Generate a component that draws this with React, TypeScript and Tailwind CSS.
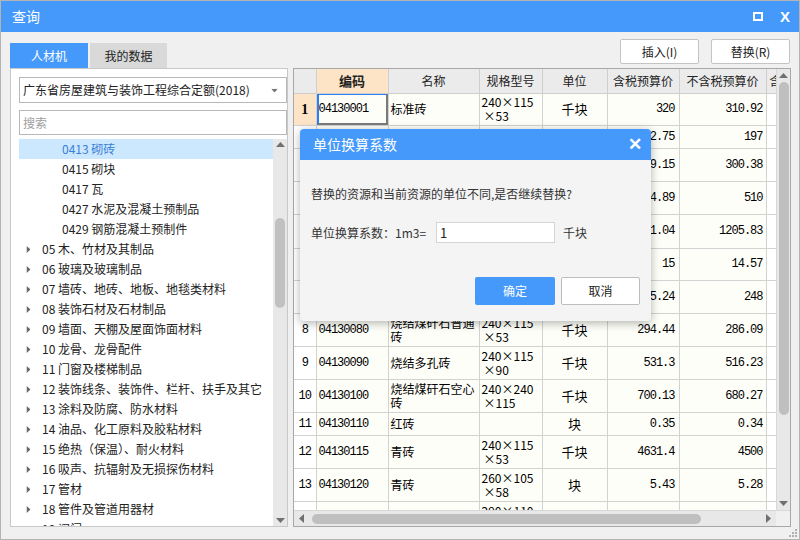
import React from 'react';

type Row = {
  no: string;
  code: string;
  name: string[];
  spec: string[];
  unit: string;
  tax: string;
  noTax: string;
  h: string;
};

const rows: Row[] = [
  { no: '1', code: '04130001', name: ['标准砖'], spec: ['240×115', '×53'], unit: '千块', tax: '320', noTax: '310.92', h: 'h-[32px]' },
  { no: '2', code: '04130005', name: ['标准砖'], spec: [], unit: '千块', tax: '202.75', noTax: '197', h: 'h-[23px]' },
  { no: '3', code: '04130010', name: ['灰砂砖'], spec: ['240×115', '×53'], unit: '千块', tax: '309.15', noTax: '300.38', h: 'h-[33px]' },
  { no: '4', code: '04130020', name: ['灰砂砖'], spec: ['240×115', '×90'], unit: '千块', tax: '524.89', noTax: '510', h: 'h-[33px]' },
  { no: '5', code: '04130030', name: ['烧结空心砖'], spec: ['240×240', '×115'], unit: '千块', tax: '1241.04', noTax: '1205.83', h: 'h-[34px]' },
  { no: '6', code: '04130040', name: ['页岩多孔砖'], spec: ['240×115', '×90'], unit: '块', tax: '15', noTax: '14.57', h: 'h-[32px]' },
  { no: '7', code: '04130050', name: ['烧结煤矸石实心', '砖'], spec: ['240×115', '×53'], unit: '千块', tax: '255.24', noTax: '248', h: 'h-[33px]' },
  { no: '8', code: '04130080', name: ['烧结煤矸石普通', '砖'], spec: ['240×115', '×53'], unit: '千块', tax: '294.44', noTax: '286.09', h: 'h-[33px]' },
  { no: '9', code: '04130090', name: ['烧结多孔砖'], spec: ['240×115', '×90'], unit: '千块', tax: '531.3', noTax: '516.23', h: 'h-[33px]' },
  { no: '10', code: '04130100', name: ['烧结煤矸石空心', '砖'], spec: ['240×240', '×115'], unit: '千块', tax: '700.13', noTax: '680.27', h: 'h-[33px]' },
  { no: '11', code: '04130110', name: ['红砖'], spec: [], unit: '块', tax: '0.35', noTax: '0.34', h: 'h-[23px]' },
  { no: '12', code: '04130115', name: ['青砖'], spec: ['240×115', '×53'], unit: '千块', tax: '4631.4', noTax: '4500', h: 'h-[33px]' },
  { no: '13', code: '04130120', name: ['青砖'], spec: ['260×105', '×58'], unit: '块', tax: '5.43', noTax: '5.28', h: 'h-[33px]' },
  { no: '14', code: '04130130', name: ['青砖'], spec: ['290×110', '×60'], unit: '块', tax: '6.12', noTax: '5.95', h: 'h-[33px]' },
];

// tree rows, sub = indented child
const tree: { label: string; sub?: boolean }[] = [
  { label: '0413 砌砖', sub: true },
  { label: '0415 砌块', sub: true },
  { label: '0417 瓦', sub: true },
  { label: '0427 水泥及混凝土预制品', sub: true },
  { label: '0429 钢筋混凝土预制件', sub: true },
  { label: '05 木、竹材及其制品' },
  { label: '06 玻璃及玻璃制品' },
  { label: '07 墙砖、地砖、地板、地毯类材料' },
  { label: '08 装饰石材及石材制品' },
  { label: '09 墙面、天棚及屋面饰面材料' },
  { label: '10 龙骨、龙骨配件' },
  { label: '11 门窗及楼梯制品' },
  { label: '12 装饰线条、装饰件、栏杆、扶手及其它' },
  { label: '13 涂料及防腐、防水材料' },
  { label: '14 油品、化工原料及胶粘材料' },
  { label: '15 绝热（保温）、耐火材料' },
  { label: '16 吸声、抗辐射及无损探伤材料' },
  { label: '17 管材' },
  { label: '18 管件及管道用器材' },
  { label: '19 阀门' },
];

const Tri = ({ dir, className }: { dir: 'up' | 'down' | 'left' | 'right'; className?: string }) => {
  const pts = {
    up: '0,5 4.5,0 9,5',
    down: '0,0 4.5,5 9,0',
    left: '5,0 0,4.5 5,9',
    right: '0,0 5,4.5 0,9',
  }[dir];
  const vertical = dir === 'up' || dir === 'down';
  return (
    <svg width={vertical ? 9 : 5} height={vertical ? 5 : 9} className={`shrink-0 ${className ?? ''}`}>
      <polygon points={pts} fill="currentColor" />
    </svg>
  );
};

const cn = "font-['Noto_Sans_CJK_SC',sans-serif]";
const mono = "font-['Liberation_Mono',monospace] text-[12px] tracking-[-1px]";

const App: React.FC = () => {
  return (
    <div className={`relative w-[800px] h-[540px] bg-[#f0f0f0] border border-[#b4b4b4] flex flex-col overflow-hidden text-[#222] text-[12px] ${cn}`}>
      {/* title bar */}
      <div className="h-[31px] bg-[#4599fa] flex items-center pl-[11px] pr-[9px] text-white shrink-0">
        <span className="text-[14px]">查询</span>
        <div className="ml-auto flex items-center gap-[17px]">
          <div className="w-[10px] h-[9px] border-2 border-white" />
          <span className="font-['Liberation_Sans',sans-serif] font-bold text-[15px] leading-none">X</span>
        </div>
      </div>

      {/* tabs + buttons */}
      <div className="h-[36px] flex shrink-0 pl-[9px] pr-[9px]">
        <div className="flex items-end gap-[2px]">
          <div className="w-[78px] h-[25px] bg-[#4599fa] text-white flex items-center justify-center">人材机</div>
          <div className="w-[77px] h-[25px] bg-[#d9d9d9] text-[#222] flex items-center justify-center">我的数据</div>
        </div>
        <div className="ml-auto flex items-start pt-[7px] gap-[12px]">
          <button className="w-[79px] h-[25px] bg-white border border-[#c4c4c4] rounded-[2px]">插入(I)</button>
          <button className="w-[79px] h-[25px] bg-white border border-[#c4c4c4] rounded-[2px]">替换(R)</button>
        </div>
      </div>

      {/* main */}
      <div className="h-[459px] flex shrink-0 pl-[9px] gap-[5px]">
        {/* left panel */}
        <div className="w-[278px] bg-white border border-[#c8c8c8] flex flex-col pl-[8px] pt-[8px]">
          <div className="h-[26px] border border-[#b8b8b8] flex items-center pl-[3px] pr-[7px] text-[#222]">
            <span>广东省房屋建筑与装饰工程综合定额(2018)</span>
            <Tri dir="down" className="ml-auto text-[#777] scale-75" />
          </div>
          <div className="mt-[7px] h-[25px] border border-[#b8b8b8] flex items-center pl-[3px] text-[#a0a0a0]">搜索</div>
          <div className="mt-[4px] flex-1 flex overflow-hidden">
            <div className="flex-1 overflow-hidden">
              {tree.map((t, i) => (
                <div
                  key={t.label}
                  className={`h-[20px] flex items-center whitespace-nowrap ${i === 0 ? 'bg-[#cce8ff] text-[#3a7fd6]' : ''}`}
                >
                  {t.sub ? (
                    <span className="pl-[43px]">{t.label}</span>
                  ) : (
                    <>
                      <Tri dir="right" className="ml-[7px] mr-[11px] text-[#666] scale-[0.8]" />
                      <span>{t.label}</span>
                    </>
                  )}
                </div>
              ))}
            </div>
            <div className="w-[14px] bg-[#e8e8e8] flex flex-col items-center">
              <Tri dir="up" className="mt-[3px] text-[#707070]" />
              <div className="mt-[71px] w-[10px] h-[90px] rounded-full bg-[#c1c1c1]" />
              <Tri dir="down" className="mt-auto mb-[3px] text-[#707070]" />
            </div>
          </div>
        </div>

        {/* right table */}
        <div className="w-[498px] border border-[#a8a8a8] bg-white flex flex-col">
          <div className="flex-1 flex overflow-hidden">
            <div className="w-[482px] overflow-hidden">
              <table className="table-fixed border-collapse w-[482px] text-[12px] text-black">
                <colgroup>
                  <col className="w-[22px]" />
                  <col className="w-[72px]" />
                  <col className="w-[91px]" />
                  <col className="w-[63px]" />
                  <col className="w-[65px]" />
                  <col className="w-[72px]" />
                  <col className="w-[87px]" />
                  <col className="w-[10px]" />
                </colgroup>
                <thead>
                  <tr className="h-[24px] bg-[#ebebeb] text-[#222]">
                    <th className="border border-[#cfcfcf] border-t-0 border-l-0 font-normal" />
                    <th className="border border-[#cfcfcf] border-t-0 bg-[#fde4c6] font-bold text-[13px]">编码</th>
                    <th className="border border-[#cfcfcf] border-t-0 font-normal">名称</th>
                    <th className="border border-[#cfcfcf] border-t-0 font-normal">规格型号</th>
                    <th className="border border-[#cfcfcf] border-t-0 font-normal">单位</th>
                    <th className="border border-[#cfcfcf] border-t-0 font-normal">含税预算价</th>
                    <th className="border border-[#cfcfcf] border-t-0 font-normal">不含税预算价</th>
                    <th className="border border-[#cfcfcf] border-t-0 border-r-0 font-normal text-left pl-[3px] overflow-hidden whitespace-nowrap">含税合价</th>
                  </tr>
                </thead>
                <tbody>
                  {rows.map((r, i) => (
                    <tr key={r.no} className={r.h}>
                      <td
                        className={`border border-[#d2d2d2] border-l-0 text-center p-0 ${
                          i === 0 ? "bg-[#fde4c6] font-['Liberation_Serif',serif] font-bold text-[14px]" : `bg-white ${mono}`
                        }`}
                      >
                        {r.no}
                      </td>
                      <td className={`relative border border-[#d2d2d2] bg-[#fefef8] p-0 ${mono}`}>
                        {i === 0 && (
                          <div className="absolute inset-0 border-t border-l-2 border-t-[#2d7ff0] border-l-[#2d7ff0] border-r-2 border-b-2 border-r-[#7b7b7b] border-b-[#7b7b7b]" />
                        )}
                        <span className="pl-[2px]">{r.code}</span>
                      </td>
                      <td className="border border-[#d2d2d2] bg-[#fefef8] p-0 leading-[14px] overflow-hidden">
                        <div className="pl-[2px]">
                          {r.name.map(n => (
                            <div key={n} className="whitespace-nowrap">{n}</div>
                          ))}
                        </div>
                      </td>
                      <td className="border border-[#d2d2d2] bg-[#fefef8] p-0 leading-[14px] overflow-hidden">
                        <div className="pl-[2px]">
                          {r.spec.map((s, k) => (
                            <div key={k} className={`whitespace-nowrap ${k === 1 ? 'pl-[2px]' : ''}`}>{s}</div>
                          ))}
                        </div>
                      </td>
                      <td className="border border-[#d2d2d2] bg-[#fefef8] p-0 text-center text-[13px]">{r.unit}</td>
                      <td className={`border border-[#d2d2d2] bg-[#fefef8] p-0 pr-[4px] text-right ${mono}`}>{r.tax}</td>
                      <td className={`border border-[#d2d2d2] bg-[#fefef8] p-0 pr-[3px] text-right ${mono}`}>{r.noTax}</td>
                      <td className="border border-[#d2d2d2] border-r-0 bg-white p-0" />
                    </tr>
                  ))}
                </tbody>
              </table>
            </div>
            {/* vertical scrollbar */}
            <div className="w-[14px] bg-[#e8e8e8] flex flex-col items-center border-l border-[#d8d8d8]">
              <Tri dir="up" className="mt-[4px] text-[#707070]" />
              <div className="mt-[4px] w-[10px] h-[333px] rounded-full bg-[#bfbfbf]" />
              <Tri dir="down" className="mt-auto mb-[4px] text-[#707070]" />
            </div>
          </div>
          {/* horizontal scrollbar */}
          <div className="h-[16px] flex shrink-0 bg-[#e8e8e8] border-t border-[#d8d8d8]">
            <div className="w-[482px] flex items-center pl-[5px] pr-[5px]">
              <Tri dir="left" className="text-[#707070]" />
              <div className="ml-[8px] w-[389px] h-[10px] rounded-full bg-[#bfbfbf]" />
              <Tri dir="right" className="ml-auto text-[#707070]" />
            </div>
            <div className="flex-1 bg-[#f0f0f0]" />
          </div>
        </div>
      </div>

      {/* footer with grip */}
      <div className="flex-1 flex justify-end items-end pr-[2px] pb-[2px]">
        <svg width="8" height="8">
          {[[6, 0], [3, 3], [6, 3], [0, 6], [3, 6], [6, 6]].map(([x, y], k) => (
            <rect key={k} x={x} y={y} width="2" height="2" fill="#b0b0b0" />
          ))}
        </svg>
      </div>

      {/* dialog */}
      <div className="absolute left-[299px] top-[128px] w-[351px] h-[192px] rounded-[4px] bg-[#f4f4f4] shadow-[0_2px_10px_rgba(0,0,0,0.3)] overflow-hidden flex flex-col">
        <div className="h-[31px] bg-[#4599fa] flex items-center pl-[13px] pr-[9px] text-white shrink-0">
          <span className="text-[14px]">单位换算系数</span>
          <span className="ml-auto font-['Liberation_Sans',sans-serif] font-bold text-[17px] leading-none">✕</span>
        </div>
        <div className="pl-[11px] pr-[11px] pt-[24px] text-[#333] flex flex-col">
          <div className="h-[20px] leading-[20px]">替换的资源和当前资源的单位不同,是否继续替换?</div>
          <div className="mt-[18px] flex items-center h-[21px]">
            <span>单位换算系数：1m3=</span>
            <div className="ml-[10px] w-[119px] h-[21px] bg-white border border-[#d4d4d4] flex items-center pl-[3px] text-[13px] text-[#222]">1</div>
            <span className="ml-[8px]">千块</span>
          </div>
          <div className="mt-[34px] flex justify-end gap-[6px]">
            <button className="w-[80px] h-[28px] rounded-[2px] bg-[#4599fa] text-white">确定</button>
            <button className="w-[79px] h-[28px] rounded-[2px] bg-white border border-[#bdbdbd] text-[#222]">取消</button>
          </div>
        </div>
      </div>
    </div>
  );
};

export default App;
